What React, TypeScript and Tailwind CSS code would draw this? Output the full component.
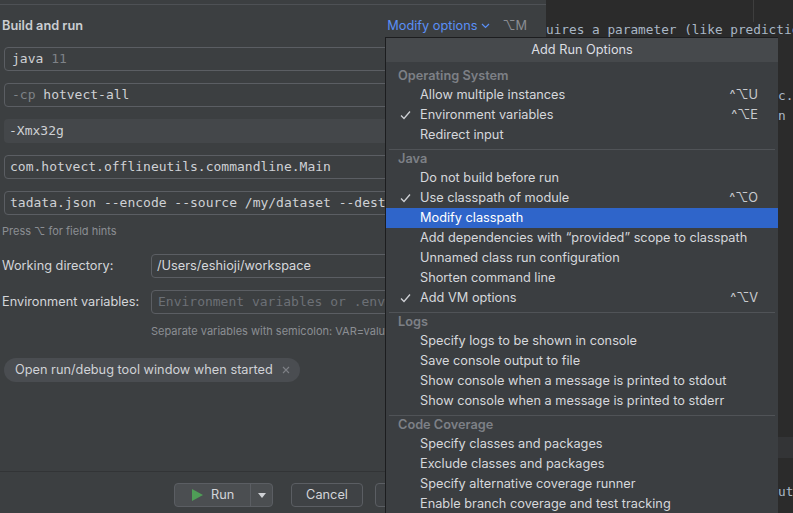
import React from "react";

const ui = { fontFamily: "Inter, 'Noto Sans', 'DejaVu Sans', sans-serif" };
const mono = { fontFamily: "'DejaVu Sans Mono', 'Liberation Mono', monospace" };

type Item = { label: string; checked?: boolean; shortcut?: string; active?: boolean };
type Section = { title: string; items: Item[] };

const sections: Section[] = [
  {
    title: "Operating System",
    items: [
      { label: "Allow multiple instances", shortcut: "^⌥U" },
      { label: "Environment variables", checked: true, shortcut: "^⌥E" },
      { label: "Redirect input" },
    ],
  },
  {
    title: "Java",
    items: [
      { label: "Do not build before run" },
      { label: "Use classpath of module", checked: true, shortcut: "^⌥O" },
      { label: "Modify classpath", active: true },
      { label: "Add dependencies with “provided” scope to classpath" },
      { label: "Unnamed class run configuration" },
      { label: "Shorten command line" },
      { label: "Add VM options", checked: true, shortcut: "^⌥V" },
    ],
  },
  {
    title: "Logs",
    items: [
      { label: "Specify logs to be shown in console" },
      { label: "Save console output to file" },
      { label: "Show console when a message is printed to stdout" },
      { label: "Show console when a message is printed to stderr" },
    ],
  },
  {
    title: "Code Coverage",
    items: [
      { label: "Specify classes and packages" },
      { label: "Exclude classes and packages" },
      { label: "Specify alternative coverage runner" },
      { label: "Enable branch coverage and test tracking" },
    ],
  },
];

function Check() {
  return (
    <svg width="11" height="10" viewBox="0 0 11 10" className="shrink-0">
      <polyline points="1,5.5 4,8.5 10,1.5" fill="none" stroke="#cfd1d5" strokeWidth="1.3" />
    </svg>
  );
}

function MenuRow({ item }: { item: Item }) {
  return (
    <div
      className={`flex h-[20px] items-center text-[12.75px] ${
        item.active ? "bg-[#2f65ca] text-white" : "text-[#d6d8dc]"
      }`}
    >
      <div className="flex w-[34px] shrink-0 justify-start pl-[14px]">{item.checked && <Check />}</div>
      <span className="flex-1 whitespace-nowrap">{item.label}</span>
      {item.shortcut && (
        <span className="pr-[20px] text-[#c9cbcf]" style={{ fontFamily: "Inter, 'DejaVu Sans', sans-serif" }}>
          {item.shortcut}
        </span>
      )}
    </div>
  );
}

function RunOptionsMenu() {
  return (
    <div
      className="absolute left-[385px] top-[37px] bottom-0 w-[393px] border-l border-t border-[#1c1d1f] bg-[#3b3e41]"
      style={ui}
    >
      <div className="flex h-[24px] items-center justify-center bg-[#46494c] text-[12.75px] text-[#dcdee2]">
        Add Run Options
      </div>
      <div className="pt-[5px]">
        {sections.map((s, i) => (
          <div key={s.title}>
            {i > 0 && <div className="mx-[3px] mt-[4px] h-px bg-[#505357]" />}
            <div className="flex h-[18px] items-center pl-[12px] text-[12.75px] font-semibold text-[#7d8086]">
              {s.title}
            </div>
            {s.items.map((it) => (
              <MenuRow key={it.label} item={it} />
            ))}
          </div>
        ))}
      </div>
    </div>
  );
}

function Field({ children, className = "" }: { children: React.ReactNode; className?: string }) {
  return (
    <div
      className={`flex h-[24px] items-center rounded-[4px] border border-[#5b5e63] px-[6px] text-[13px] text-[#cfd1d5] ${className}`}
      style={mono}
    >
      <span className="whitespace-nowrap">{children}</span>
    </div>
  );
}

function Dialog() {
  return (
    <div className="flex w-[546px] shrink-0 flex-col bg-[#3c3f41] text-[#d3d5d9]" style={ui}>
      <div className="mt-[4px] h-px bg-[#4e5155]" />
      <div className="flex h-[42px] items-center justify-between pl-[2px] pr-[19px]">
        <span className="text-[12.75px] font-semibold text-[#cbced2]">Build and run</span>
        <div className="flex items-center gap-[4px] text-[12.75px]">
          <span className="text-[#5a8ff6]">Modify options</span>
          <svg width="9" height="6" viewBox="0 0 9 6">
            <polyline points="1,1 4.5,4.5 8,1" fill="none" stroke="#5a8ff6" strokeWidth="1.2" />
          </svg>
          <span className="ml-[8px] text-[#8a8d92]" style={{ fontFamily: "Inter, 'DejaVu Sans', sans-serif" }}>
            ⌥M
          </span>
        </div>
      </div>

      <div className="flex w-[530px] flex-col gap-[12px] pl-[4px]">
        <Field className="pl-[7px]">
          java <span className="text-[#7e8287]">11</span>
        </Field>
        <Field className="pl-[7px]">
          <span className="text-[#7e8287]">-cp</span> hotvect-all
        </Field>
        <Field className="border-transparent bg-[#44474a] pl-[4px]">-Xmx32g</Field>
        <Field className="pl-[5px]">com.hotvect.offlineutils.commandline.Main</Field>
        <Field className="pl-[5px]">tadata.json --encode --source /my/dataset --dest /my/output</Field>
      </div>

      <div className="mt-[9px] pl-[2px] text-[11px] leading-[14px] text-[#8b8e93]">Press ⌥ for field hints</div>

      <div className="mt-[16px] flex items-center">
        <span className="w-[151px] shrink-0 pl-[2px] text-[12.75px]">Working directory:</span>
        <div className="flex h-[24px] w-[380px] items-center rounded-[4px] border border-[#5b5e63] pl-[5px] text-[12.75px] text-[#d6d8dc]">
          /Users/eshioji/workspace
        </div>
      </div>
      <div className="mt-[12px] flex items-center">
        <span className="w-[151px] shrink-0 pl-[2px] text-[12.75px]">Environment variables:</span>
        <div
          className="flex h-[24px] w-[380px] items-center whitespace-nowrap rounded-[4px] border border-[#5b5e63] pl-[6px] text-[13px] text-[#6c7076]"
          style={mono}
        >
          Environment variables or .env files
        </div>
      </div>
      <div className="mt-[10px] pl-[151px] text-[11px] leading-[14px] whitespace-nowrap text-[#8b8e93]">
        Separate variables with semicolon: VAR=value; VAR1=value1
      </div>

      <div className="mt-[18px] pl-[4px]">
        <div className="inline-flex h-[24px] items-center gap-[9px] rounded-full bg-[#4a4d51] pl-[11px] pr-[10px] text-[12.75px] text-[#d0d2d6]">
          Open run/debug tool window when started
          <svg width="8" height="8" viewBox="0 0 8 8">
            <path d="M1 1 L7 7 M7 1 L1 7" stroke="#7e8186" strokeWidth="1.1" />
          </svg>
        </div>
      </div>

      <div className="flex-1" />
      <div className="h-px bg-[#323436]" />
      <div className="flex items-center gap-[18px] pb-[6px] pl-[174px] pt-[11px]">
        <div className="flex h-[24px] w-[99px] items-stretch rounded-[4px] border border-[#5b5e63] bg-[#4b4e51] text-[12.75px]">
          <div className="flex flex-1 items-center gap-[8px] pl-[17px]">
            <svg width="11" height="12" viewBox="0 0 11 12">
              <polygon points="0,0 11,6 0,12" fill="#4f9d57" />
            </svg>
            <span>Run</span>
          </div>
          <div className="flex w-[22px] items-center justify-center border-l border-[#5b5e63]">
            <svg width="8" height="5" viewBox="0 0 8 5">
              <polygon points="0,0 8,0 4,5" fill="#cfd1d5" />
            </svg>
          </div>
        </div>
        <div className="flex h-[24px] w-[72px] items-center justify-center rounded-[4px] border border-[#5b5e63] bg-[#3f4245] text-[12.75px]">
          Cancel
        </div>
        <div className="-ml-[6px] flex h-[24px] w-[70px] items-center justify-center rounded-[4px] border border-[#5b5e63] bg-[#3f4245] text-[12.75px]">
          Apply
        </div>
      </div>
    </div>
  );
}

function Editor() {
  return (
    <div className="relative flex-1 overflow-hidden bg-[#2b2b2b] text-[12.75px] text-[#a9b7c6]" style={mono}>
      <div className="absolute left-[207px] top-0 h-[22px] w-px bg-[#3e3e3e]" />
      <div className="flex flex-col whitespace-pre leading-[20px]">
        <div className="mt-[20px]">uires a parameter (like predictions)</div>
        <div className="mt-[46px] pl-[232px]">c.</div>
        <div className="pl-[232px]">n c</div>
        <div className="mt-[311px] h-[21px] bg-[#333436]" />
        <div className="mt-[24px] pl-[232px]">ut</div>
      </div>
    </div>
  );
}

export default function App() {
  return (
    <div className="relative flex h-[513px] w-[793px] overflow-hidden bg-[#2b2b2b]">
      <Dialog />
      <Editor />
      <RunOptionsMenu />
    </div>
  );
}
